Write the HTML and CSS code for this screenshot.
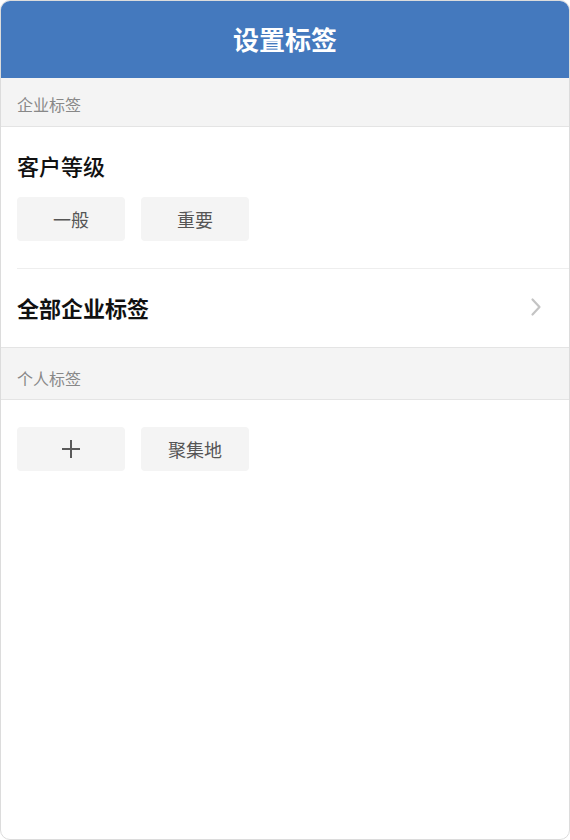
FILE: index.html
```html
<!DOCTYPE html>
<html lang="zh-CN">
<head>
  <meta charset="UTF-8" />
  <title>设置标签</title>
  <link rel="stylesheet" href="styles.css">
</head>
<body>
  <div class="phone">
    <div class="topbar">设置标签</div>

    <div class="band">企业标签</div>
    <div class="group">
      <div class="group-title">客户等级</div>
      <div class="tags">
        <span class="tag">一般</span>
        <span class="tag">重要</span>
      </div>
    </div>
    <div class="divider"></div>
    <div class="row">
      <span class="row-label">全部企业标签</span>
      <svg class="chevron" width="12" height="20" viewBox="0 0 12 20">
        <path d="M2.5 2.5 L9.5 10 L2.5 17.5" fill="none" stroke="#c4c4c4" stroke-width="2.2" stroke-linecap="round" stroke-linejoin="round"/>
      </svg>
    </div>

    <div class="band band-second">个人标签</div>
    <div class="group group-personal">
      <div class="tags">
        <span class="tag">
          <svg width="20" height="20" viewBox="0 0 20 20">
            <path d="M10 1 V19 M1 10 H19" stroke="#5a5a5a" stroke-width="2"/>
          </svg>
        </span>
        <span class="tag">聚集地</span>
      </div>
    </div>
  </div>
</body>
</html>
```

FILE: styles.css
```css
body {
  margin: 0;
  font-family: "Noto Sans CJK SC", "Noto Sans", sans-serif;
  background: #fff;
}
.phone {
  width: 570px;
  height: 840px;
  box-sizing: border-box;
  border: 1px solid #dcdcdc;
  border-radius: 10px;
  overflow: hidden;
  background: #fff;
}
.topbar {
  height: 78px;
  margin: -1px -1px 0;
  background: #4479be;
  color: #fff;
  font-size: 26px;
  font-weight: bold;
  display: flex;
  align-items: center;
  justify-content: center;
  padding-bottom: 2px;
  box-sizing: border-box;
}
.band {
  height: 49px;
  box-sizing: border-box;
  padding: 15px 16px 0;
  background: #f4f4f4;
  border-bottom: 1px solid #e4e4e4;
  color: #888;
  font-size: 16px;
  line-height: 22px;
}
.band-second {
  height: 53px;
  padding-top: 19px;
  border-top: 1px solid #e4e4e4;
}
.group {
  padding: 24px 16px 27px;
}
.group-title {
  font-size: 22px;
  font-weight: 500;
  color: #111;
  line-height: 28px;
  margin-bottom: 18px;
}
.divider {
  height: 1px;
  margin-left: 16px;
  background: #eeeeee;
}
.tags {
  display: flex;
  gap: 16px;
}
.tag {
  width: 108px;
  height: 44px;
  border-radius: 4px;
  background: #f4f4f4;
  color: #555;
  font-size: 18px;
  display: flex;
  align-items: center;
  justify-content: center;
}
.row {
  height: 78px;
  box-sizing: border-box;
  padding: 0 27px 3px 16px;
  display: flex;
  align-items: center;
  justify-content: space-between;
}
.row-label {
  font-size: 22px;
  font-weight: bold;
  color: #111;
}
.group-personal {
  padding-top: 27px;
}
```
